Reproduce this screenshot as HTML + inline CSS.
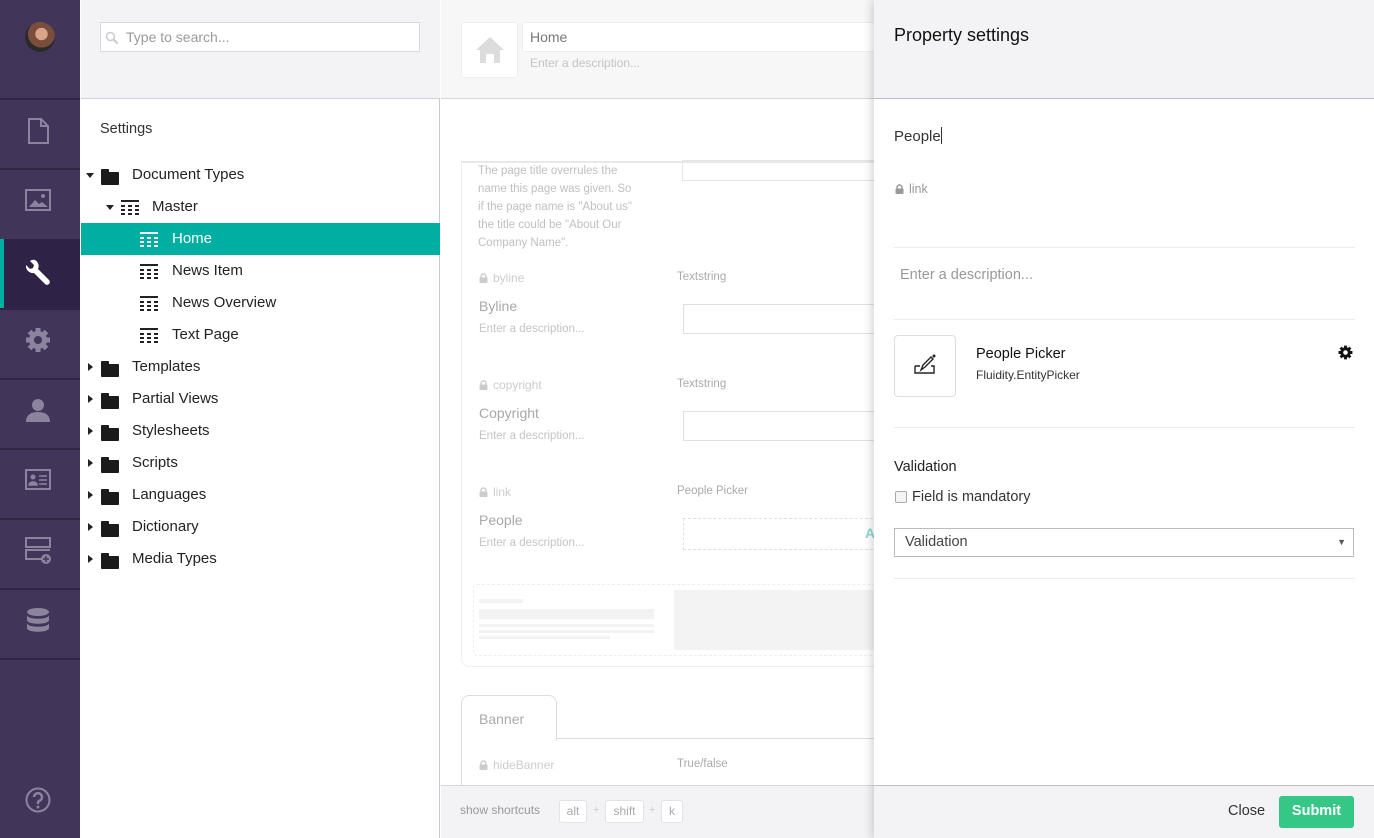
<!DOCTYPE html>
<html><head><meta charset="utf-8"><style>
*{box-sizing:border-box;margin:0;padding:0}
body{width:1374px;height:838px;overflow:hidden;font-family:"Liberation Sans",sans-serif;position:relative;background:#fff;color:#1b264f}
.a{position:absolute}
.sb{left:0;top:0;width:80px;height:838px;background:#413659}
.sep{left:0;width:80px;height:2px;background:#2f2545}
.tree{left:81px;top:0;width:359px;height:838px;background:#fff;border-right:1px solid #c8c8d0}
.row{position:absolute;left:0;width:359px;height:32px;font-size:15px;color:#222;line-height:32px}
.row .t{position:absolute}
.fold{position:absolute;width:18px;height:13px;background:#1a1a1a;border-radius:1px}
.fold:before{content:"";position:absolute;left:0;top:-3px;width:8px;height:4px;background:#1a1a1a;border-radius:1px 1px 0 0}
.car{position:absolute;width:0;height:0;border-left:4px solid transparent;border-right:4px solid transparent;border-top:5px solid #222}
.carr{position:absolute;width:0;height:0;border-top:4px solid transparent;border-bottom:4px solid transparent;border-left:5px solid #222}
.grid{position:absolute;width:18px;height:15px}
.mid{left:441px;top:0;width:433px;height:838px;background:#fff}
.g{color:#c4c4c4;font-size:12px}
.rp{left:874px;top:0;width:500px;height:838px;background:#fff;box-shadow:-3px 0 8px rgba(0,0,0,.15)}
.hr{height:1px;background:#ececec;left:20px;width:461px}
.lk{display:inline-block;width:9px;height:10px;vertical-align:-1px;margin-right:5px}
</style></head><body>
<svg width="0" height="0" style="position:absolute"><defs><symbol id="lock" viewBox="0 0 9 10"><path d="M2 5V3.5a2.5 2.5 0 0 1 5 0V5" fill="none" stroke="currentColor" stroke-width="1.4"/><rect x="0.5" y="4.5" width="8" height="5.5" rx="1" fill="currentColor"/></symbol>
<symbol id="gr" viewBox="0 0 18 15"><path d="M0 1h18M0 6h4M7 6h4M14 6h4M0 10h4M7 10h4M14 10h4M0 14h4M7 14h4M14 14h4" stroke="currentColor" stroke-width="2"/></symbol></defs></svg>
<div class="a sb">
 <div class="a" style="left:25px;top:22px;width:30px;height:30px;border-radius:50%;background:radial-gradient(circle at 55% 40%,#d9a58a 0 25%,#7a4e3a 26% 55%,#2a2a2a 56%)"></div>
 <div class="a sep" style="top:98px"></div>
 <div class="a sep" style="top:168px"></div>
 <div class="a" style="left:0;top:239px;width:80px;height:70px;background:#2e2246"></div>
 <div class="a" style="left:0;top:239px;width:4px;height:70px;background:#00aea2"></div>
 <div class="a sep" style="top:308px"></div>
 <div class="a sep" style="top:378px"></div>
 <div class="a sep" style="top:448px"></div>
 <div class="a sep" style="top:518px"></div>
 <div class="a sep" style="top:588px"></div>
 <div class="a sep" style="top:658px"></div>
 <svg class="a" style="left:26px;top:117px" width="26" height="28" viewBox="0 0 26 28"><path d="M3 2h12l7 7v17H3z M15 2v7h7" fill="none" stroke="#8c839f" stroke-width="2"/></svg>
 <svg class="a" style="left:25px;top:189px" width="27" height="24" viewBox="0 0 27 24"><rect x="1" y="1" width="24" height="20" fill="none" stroke="#8c839f" stroke-width="2"/><path d="M4 18l6-7 4 4 3-2 6 5z" fill="#8c839f"/><circle cx="18" cy="7" r="2" fill="#8c839f"/></svg>
 <svg class="a" style="left:26px;top:259px" width="26" height="26" viewBox="0 0 26 26"><path d="M9 1a6 6 0 0 0-5 1l4 4-1 3-3 1-4-4a7 7 0 0 0 8 8l11 11a2.5 2.5 0 0 0 4-4L12 10a7 7 0 0 0-3-9z" fill="#fff"/></svg>
 <svg class="a" style="left:25px;top:327px" width="26" height="26" viewBox="0 0 26 26"><circle cx="13" cy="13" r="9" fill="#8c839f"/><g stroke="#8c839f" stroke-width="5"><path d="M13 1v24M1 13h24M4.5 4.5l17 17M21.5 4.5l-17 17"/></g><circle cx="13" cy="13" r="4" fill="#413659"/></svg>
 <svg class="a" style="left:25px;top:397px" width="26" height="26" viewBox="0 0 26 26"><circle cx="13" cy="8" r="6" fill="#8c839f"/><path d="M1 25c0-8 6-10 12-10s12 2 12 10z" fill="#8c839f"/></svg>
 <svg class="a" style="left:25px;top:469px" width="27" height="22" viewBox="0 0 27 22"><rect x="1" y="1" width="24" height="19" fill="none" stroke="#8c839f" stroke-width="2"/><circle cx="8" cy="8" r="2.5" fill="#8c839f"/><path d="M4 16c0-4 8-4 8 0z M14 7h8M14 11h8M14 15h8" fill="#8c839f" stroke="#8c839f" stroke-width="1.5"/></svg>
 <svg class="a" style="left:25px;top:537px" width="28" height="28" viewBox="0 0 28 28"><rect x="1" y="1" width="24" height="9" fill="none" stroke="#8c839f" stroke-width="2"/><path d="M17 22H1v-9h24" fill="none" stroke="#8c839f" stroke-width="2"/><circle cx="21" cy="22" r="5" fill="#8c839f"/><path d="M21 19v6M18 22h6" stroke="#413659" stroke-width="1.5"/></svg>
 <svg class="a" style="left:26px;top:607px" width="24" height="28" viewBox="0 0 24 28"><ellipse cx="12" cy="5" rx="11" ry="4" fill="#8c839f"/><path d="M1 8c0 5 22 5 22 0v5c0 5-22 5-22 0z M1 16c0 5 22 5 22 0v5c0 5-22 5-22 0z" fill="#8c839f"/></svg>
 <svg class="a" style="left:25px;top:787px" width="27" height="27" viewBox="0 0 27 27"><circle cx="13" cy="13" r="11.5" fill="none" stroke="#8c839f" stroke-width="2"/><path d="M9 10a4 4 0 1 1 5 4c-1 .5-1 1-1 3" fill="none" stroke="#8c839f" stroke-width="2.5"/><circle cx="13" cy="20" r="1.5" fill="#8c839f"/></svg>
</div>

<div class="a tree">
 <div class="a" style="left:0;top:0;width:359px;height:99px;background:#f3f3f5;border-bottom:1px solid #cfcfd6"></div>
 <div class="a" style="left:19px;top:22px;width:320px;height:30px;background:#fff;border:1px solid #d8d8d8;font-size:14px;color:#9a9a9a;line-height:28px;padding-left:25px">Type to search...</div>
 <svg class="a" style="left:24px;top:31px" width="14" height="14" viewBox="0 0 14 14"><circle cx="5.5" cy="5.5" r="4" fill="none" stroke="#ccc" stroke-width="1.5"/><path d="M8.5 8.5l4 4" stroke="#ccc" stroke-width="2"/></svg>
 <div class="a" style="left:19px;top:121px;font-size:14.5px;color:#333">Settings</div>

 <div class="row" style="top:159px"><div class="car" style="left:5px;top:14px"></div><div class="fold" style="left:20px;top:13px"></div><span class="t" style="left:51px">Document Types</span></div>
 <div class="row" style="top:191px"><div class="car" style="left:25px;top:14px"></div><svg class="grid" style="left:40px;top:9px;color:#222"><use href="#gr"/></svg><span class="t" style="left:71px">Master</span></div>
 <div class="row" style="top:223px;background:#00aea2;color:#fff"><svg class="grid" style="left:59px;top:9px;color:#fff"><use href="#gr"/></svg><span class="t" style="left:91px">Home</span></div>
 <div class="row" style="top:255px"><svg class="grid" style="left:59px;top:9px;color:#222"><use href="#gr"/></svg><span class="t" style="left:91px">News Item</span></div>
 <div class="row" style="top:287px"><svg class="grid" style="left:59px;top:9px;color:#222"><use href="#gr"/></svg><span class="t" style="left:91px">News Overview</span></div>
 <div class="row" style="top:319px"><svg class="grid" style="left:59px;top:9px;color:#222"><use href="#gr"/></svg><span class="t" style="left:91px">Text Page</span></div>
 <div class="row" style="top:351px"><div class="carr" style="left:7px;top:12px"></div><div class="fold" style="left:20px;top:13px"></div><span class="t" style="left:51px">Templates</span></div>
 <div class="row" style="top:383px"><div class="carr" style="left:7px;top:12px"></div><div class="fold" style="left:20px;top:13px"></div><span class="t" style="left:51px">Partial Views</span></div>
 <div class="row" style="top:415px"><div class="carr" style="left:7px;top:12px"></div><div class="fold" style="left:20px;top:13px"></div><span class="t" style="left:51px">Stylesheets</span></div>
 <div class="row" style="top:447px"><div class="carr" style="left:7px;top:12px"></div><div class="fold" style="left:20px;top:13px"></div><span class="t" style="left:51px">Scripts</span></div>
 <div class="row" style="top:479px"><div class="carr" style="left:7px;top:12px"></div><div class="fold" style="left:20px;top:13px"></div><span class="t" style="left:51px">Languages</span></div>
 <div class="row" style="top:511px"><div class="carr" style="left:7px;top:12px"></div><div class="fold" style="left:20px;top:13px"></div><span class="t" style="left:51px">Dictionary</span></div>
 <div class="row" style="top:543px"><div class="carr" style="left:7px;top:12px"></div><div class="fold" style="left:20px;top:13px"></div><span class="t" style="left:51px">Media Types</span></div>
</div>

<div class="a mid">
 <div class="a" style="left:0;top:0;width:433px;height:99px;background:#f7f7f7;border-bottom:1px solid #d6d6dc"></div>
 <div class="a" style="left:20px;top:22px;width:57px;height:56px;background:#fff;border:1px solid #eee;border-radius:3px"></div>
 <svg class="a" style="left:33px;top:34px" width="32" height="32" viewBox="0 0 32 32"><path d="M2 16L16 3l14 13h-4v13h-6v-9h-8v9H6V16z" fill="#dcdcdc"/></svg>
 <div class="a" style="left:81px;top:22px;width:360px;height:30px;background:#fff;border:1px solid #eee;font-size:14px;color:#777;line-height:28px;padding-left:7px">Home</div>
 <div class="a g" style="left:89px;top:56px">Enter a description...</div>
 <div class="a" style="left:20px;top:161px;width:420px;height:506px;border:1px solid #eee;border-top:2px solid #e8e8e8;border-radius:0 0 8px 8px"></div>
 <div class="a" style="left:241px;top:160px;width:200px;height:21px;border:1px solid #e6e6e6"></div>
 <div class="a" style="left:37px;top:162px;font-size:11.5px;color:#c0c0c0;line-height:18px;width:160px">The page title overrules the name this page was given. So if the page name is "About us" the title could be "About Our Company Name".</div>
 <div class="a g" style="left:38px;top:271px;color:#ccc"><svg class="lk"><use href="#lock"/></svg>byline</div>
 <div class="a" style="left:38px;top:298px;font-size:14px;color:#a8a8a8">Byline</div>
 <div class="a g" style="left:38px;top:323px;font-size:11.5px">Enter a description...</div>
 <div class="a g" style="left:236px;top:271px;color:#aaa;font-size:11.5px">Textstring</div>
 <div class="a" style="left:242px;top:304px;width:200px;height:30px;border:1px solid #e0e0e0"></div>
 <div class="a g" style="left:38px;top:378px;color:#ccc"><svg class="lk"><use href="#lock"/></svg>copyright</div>
 <div class="a" style="left:38px;top:405px;font-size:14px;color:#a8a8a8">Copyright</div>
 <div class="a g" style="left:38px;top:430px;font-size:11.5px">Enter a description...</div>
 <div class="a g" style="left:236px;top:378px;color:#aaa;font-size:11.5px">Textstring</div>
 <div class="a" style="left:242px;top:411px;width:200px;height:30px;border:1px solid #e0e0e0"></div>
 <div class="a g" style="left:38px;top:485px;color:#ccc"><svg class="lk"><use href="#lock"/></svg>link</div>
 <div class="a" style="left:38px;top:512px;font-size:14px;color:#a8a8a8">People</div>
 <div class="a g" style="left:38px;top:537px;font-size:11.5px">Enter a description...</div>
 <div class="a g" style="left:236px;top:485px;color:#aaa;font-size:11.5px">People Picker</div>
 <div class="a" style="left:242px;top:518px;width:200px;height:32px;border:1px dashed #e0e0e0"></div>
 <div class="a" style="left:424px;top:525px;font-size:14px;color:#8fd8d2;font-weight:bold">A</div>
 <div class="a" style="left:32px;top:584px;width:410px;height:72px;border:1px dashed #eee;border-radius:4px"></div>
 <div class="a" style="left:38px;top:599px;width:44px;height:4px;background:#f2f2f2"></div>
 <div class="a" style="left:38px;top:609px;width:175px;height:10px;background:#f2f2f2"></div>
 <div class="a" style="left:38px;top:624px;width:175px;height:3px;background:#f2f2f2"></div>
 <div class="a" style="left:38px;top:630px;width:175px;height:3px;background:#f2f2f2"></div>
 <div class="a" style="left:38px;top:636px;width:131px;height:3px;background:#f2f2f2"></div>
 <div class="a" style="left:233px;top:590px;width:200px;height:60px;background:#f3f3f3"></div>
 <div class="a" style="left:20px;top:695px;width:96px;height:46px;border:1px solid #ddd;border-bottom:none;border-radius:8px 8px 0 0;background:#fff;font-size:14px;color:#aaa;padding:15px 0 0 17px">Banner</div>
 <div class="a" style="left:115px;top:738px;width:320px;height:1px;background:#ddd"></div>
 <div class="a" style="left:20px;top:740px;width:1px;height:50px;background:#ddd"></div>
 <div class="a g" style="left:38px;top:758px;color:#ccc"><svg class="lk"><use href="#lock"/></svg>hideBanner</div>
 <div class="a g" style="left:236px;top:758px;color:#aaa;font-size:11.5px">True/false</div>
 <div class="a" style="left:0;top:785px;width:433px;height:53px;background:#f3f3f5;border-top:1px solid #d6d6dc"></div>
 <div class="a" style="left:19px;top:803px;font-size:12px;color:#999">show shortcuts</div>
 <div class="a" style="left:118px;top:800px;width:28px;height:23px;border:1px solid #e3e3e3;border-radius:3px;background:#fff;font-size:12px;color:#aaa;text-align:center;line-height:21px">alt</div>
 <div class="a" style="left:152px;top:804px;font-size:11px;color:#ccc">+</div>
 <div class="a" style="left:164px;top:800px;width:39px;height:23px;border:1px solid #e3e3e3;border-radius:3px;background:#fff;font-size:12px;color:#aaa;text-align:center;line-height:21px">shift</div>
 <div class="a" style="left:208px;top:804px;font-size:11px;color:#ccc">+</div>
 <div class="a" style="left:220px;top:800px;width:22px;height:23px;border:1px solid #e3e3e3;border-radius:3px;background:#fff;font-size:12px;color:#aaa;text-align:center;line-height:21px">k</div>
</div>

<div class="a rp">
 <div class="a" style="left:0;top:0;width:500px;height:99px;background:#f3f3f5;border-bottom:1px solid #bdbdc4"></div>
 <div class="a" style="left:20px;top:25px;font-size:18px;color:#111">Property settings</div>
 <div class="a" style="left:20px;top:127px;font-size:15px;color:#333">People<span style="display:inline-block;width:1px;height:17px;background:#333;vertical-align:-3px"></span></div>
 <div class="a" style="left:21px;top:182px;font-size:12.5px;color:#999"><svg class="lk"><use href="#lock"/></svg>link</div>
 <div class="a hr" style="top:247px"></div>
 <div class="a" style="left:26px;top:267px;font-size:14.5px;color:#999">Enter a description...</div>
 <div class="a hr" style="top:319px"></div>
 <div class="a" style="left:20px;top:335px;width:62px;height:62px;border:1px solid #ddd;border-radius:4px"></div>
 <svg class="a" style="left:39px;top:354px" width="24" height="22" viewBox="0 0 24 22"><path d="M2 12h5M2 12v7h19v-7h-3" fill="none" stroke="#222" stroke-width="1.4"/><path d="M8 16l2-5 8-8 2 2-8 8z" fill="none" stroke="#222" stroke-width="1.4"/><circle cx="21" cy="2" r="1.5" fill="#222"/></svg>
 <div class="a" style="left:102px;top:346px;font-size:14.5px;color:#111">People Picker</div>
 <div class="a" style="left:102px;top:368px;font-size:12px;color:#333">Fluidity.EntityPicker</div>
 <svg class="a" style="left:464px;top:345px" width="15" height="15" viewBox="0 0 26 26"><circle cx="13" cy="13" r="9" fill="#111"/><g stroke="#111" stroke-width="5"><path d="M13 1v24M1 13h24M4.5 4.5l17 17M21.5 4.5l-17 17"/></g><circle cx="13" cy="13" r="4" fill="#fff"/></svg>
 <div class="a hr" style="top:427px"></div>
 <div class="a" style="left:20px;top:459px;font-size:14.5px;color:#222">Validation</div>
 <div class="a" style="left:21px;top:491px;width:12px;height:12px;border:1px solid #aaa;border-radius:2px;background:#f4f4f4"></div>
 <div class="a" style="left:38px;top:489px;font-size:14.5px;color:#333">Field is mandatory</div>
 <div class="a" style="left:20px;top:528px;width:460px;height:29px;border:1px solid #bbb;font-size:14.5px;color:#444;line-height:27px;padding-left:10px">Validation<span style="position:absolute;right:7px;font-size:9px;color:#555">▼</span></div>
 <div class="a hr" style="top:578px"></div>
 <div class="a" style="left:0;top:785px;width:500px;height:53px;background:#f3f3f5;border-top:1px solid #bdbdc4"></div>
 <div class="a" style="left:354px;top:803px;font-size:14.5px;color:#333">Close</div>
 <div class="a" style="left:405px;top:796px;width:75px;height:32px;background:#35c786;border-radius:3px;color:#fff;font-weight:bold;font-size:14.5px;text-align:center;line-height:30px">Submit</div>
</div>
</body></html>
